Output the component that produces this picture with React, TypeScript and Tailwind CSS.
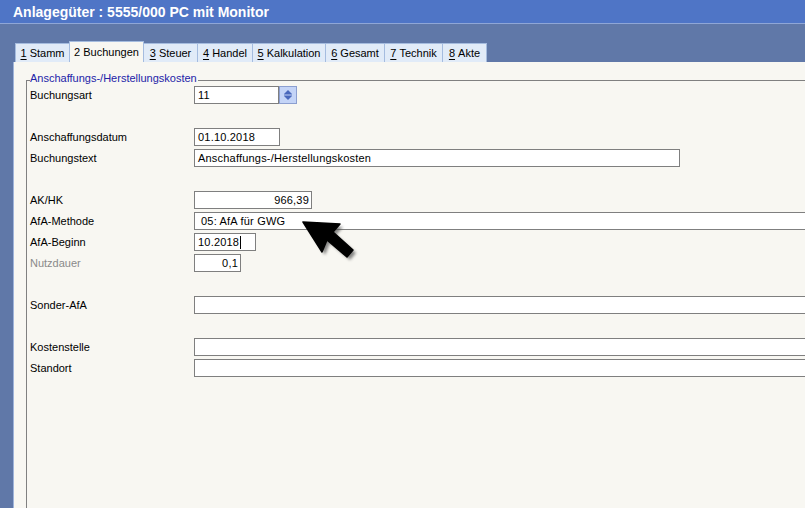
import React from "react";

const font = { fontFamily: '"Liberation Sans", Arial, sans-serif' };

type Tab = { n: string; label: string; active?: boolean; w: string };

const tabs: Tab[] = [
  { n: "1", label: "Stamm", w: "w-[55px]" },
  { n: "2", label: "Buchungen", active: true, w: "w-[75px]" },
  { n: "3", label: "Steuer", w: "w-[55px]" },
  { n: "4", label: "Handel", w: "w-[56px]" },
  { n: "5", label: "Kalkulation", w: "w-[74px]" },
  { n: "6", label: "Gesamt", w: "w-[60px]" },
  { n: "7", label: "Technik", w: "w-[59px]" },
  { n: "8", label: "Akte", w: "w-[45px]" },
];

function Input({
  w,
  text,
  right,
  caret,
  pl,
}: {
  w: string;
  text?: string;
  right?: boolean;
  caret?: boolean;
  pl?: string;
}) {
  return (
    <div
      className={`${w} h-[18px] bg-white border border-[#7f7f7f] flex items-center text-[11px] text-black leading-none ${
        right ? "justify-end pr-[2px]" : pl ?? "pl-[3px]"
      }`}
    >
      <span className="tracking-[0.2px]">{text}</span>
      {caret && <span className="w-px h-[13px] bg-black ml-px" />}
    </div>
  );
}

function Row({
  label,
  gray,
  children,
}: {
  label?: string;
  gray?: boolean;
  children?: React.ReactNode;
}) {
  return (
    <div className="h-[21px] flex items-start">
      <div
        className={`w-[167px] shrink-0 pl-[3px] h-[18px] flex items-center text-[11px] ${
          gray ? "text-[#8a8a8a]" : "text-black"
        }`}
      >
        {label}
      </div>
      {children}
    </div>
  );
}

function Spinner() {
  return (
    <div className="w-[18px] h-[18px] bg-[#c4d4f7] border border-[#8c9fd0] flex items-center justify-center">
      <svg width="10" height="12" viewBox="0 0 10 12">
        <path d="M5 1 L9 5 L1 5 Z" fill="#4a68bc" />
        <rect x="1" y="5.5" width="8" height="1" fill="#4a68bc" />
        <path d="M1 7 L9 7 L5 11 Z" fill="#4a68bc" />
      </svg>
    </div>
  );
}

export default function App() {
  return (
    <div
      className="w-[805px] h-[508px] overflow-hidden bg-[#6078a8] relative"
      style={font}
    >
      {/* Title bar */}
      <div className="h-[24px] bg-[#4f75c6] flex items-center pl-[13px] border-b border-[#8fa6d6]">
        <span className="text-white font-bold text-[14px] leading-none">
          Anlagegüter : 5555/000 PC mit Monitor
        </span>
      </div>

      {/* Tab strip */}
      <div className="pl-[15px] flex items-end h-[38px]">
        {tabs.map((t) =>
          t.active ? (
            <div
              key={t.n}
              className={`${t.w} h-[21px] bg-[#f8f7f2] border border-b-0 border-[#a5bcdf] -ml-px flex items-center justify-center text-[11px] text-black relative z-10`}
            >
              {t.n} {t.label}
            </div>
          ) : (
            <div
              key={t.n}
              className={`${t.w} h-[19px] bg-[#e1ebf8] border border-b-0 border-[#a5bcdf] -ml-px first:ml-0 flex items-center justify-center text-[11px] text-black`}
            >
              <span className="underline underline-offset-[2px]">{t.n}</span>
              <span>&nbsp;{t.label}</span>
            </div>
          )
        )}
      </div>

      {/* Panel */}
      <div className="ml-[13px] w-[840px] h-[446px] bg-[#f8f7f2] border-l border-[#9fb4da] pl-[12px] pt-[18px]">
        <div className="relative border-l border-t border-[#808080] h-[440px] pt-[5px]">
          <div className="absolute -top-[8px] left-[3px] bg-[#f8f7f2] pr-[1px] text-[11px] leading-none text-[#2323a8]">
            Anschaffungs-/Herstellungskosten
          </div>
          <Row label="Buchungsart">
            <Input w="w-[85px]" text="11" />
            <Spinner />
          </Row>
          <Row />
          <Row label="Anschaffungsdatum">
            <Input w="w-[86px]" text="01.10.2018" />
          </Row>
          <Row label="Buchungstext">
            <Input w="w-[486px]" text="Anschaffungs-/Herstellungskosten" />
          </Row>
          <Row />
          <Row label="AK/HK">
            <Input w="w-[118px]" text="966,39" right />
          </Row>
          <Row label="AfA-Methode">
            <Input w="w-[640px]" text="05: AfA für GWG" pl="pl-[6px]" />
          </Row>
          <Row label="AfA-Beginn">
            <Input w="w-[62px]" text="10.2018" caret />
          </Row>
          <Row label="Nutzdauer" gray>
            <Input w="w-[47px]" text="0,1" right />
          </Row>
          <Row />
          <Row label="Sonder-AfA">
            <Input w="w-[640px]" />
          </Row>
          <Row />
          <Row label="Kostenstelle">
            <Input w="w-[640px]" />
          </Row>
          <Row label="Standort">
            <Input w="w-[640px]" />
          </Row>
        </div>
      </div>

      {/* Arrow pointer overlay */}
      <svg
        className="absolute left-[298px] top-[216px]"
        width="66"
        height="52"
        viewBox="0 0 66 52"
      >
        <defs>
          <filter id="sh" x="-20%" y="-20%" width="140%" height="140%">
            <feGaussianBlur stdDeviation="1.5" />
          </filter>
        </defs>
        <polygon
          points="5,6 42,8 35,16 55,34 49,41 29,24 24,36"
          fill="#555"
          opacity="0.7"
          transform="translate(3,3)"
          filter="url(#sh)"
          strokeLinejoin="round"
        />
        <polygon
          points="5,6 42,8 35,16 55,34 49,41 29,24 24,36"
          fill="#000"
          stroke="#000"
          strokeWidth="1.5"
          strokeLinejoin="round"
        />
      </svg>
    </div>
  );
}
